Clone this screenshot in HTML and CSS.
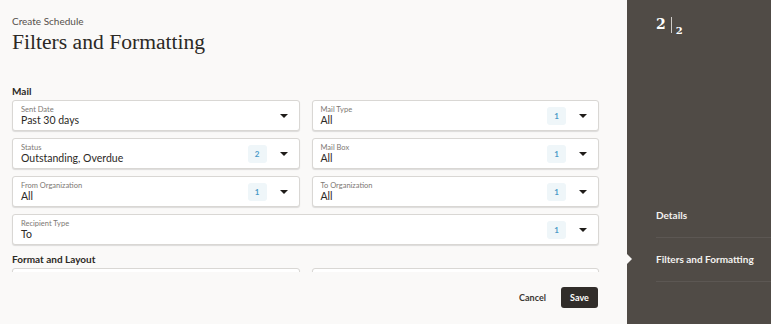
FILE: index.html
```html
<!DOCTYPE html>
<html>
<head>
    <title>Create Schedule</title>
    <link rel="stylesheet" href="styles.css">
</head>
<body>
    <div class="page">
        <div class="main">
            <div class="header">
                <div class="crumb">Create Schedule</div>
                <h1 class="title">Filters and Formatting</h1>
            </div>

            <div class="scroll">
                <div class="section-title">Mail</div>
                <div class="grid">
                    <div class="field">
                        <div class="field-text">
                            <div class="label">Sent Date</div>
                            <div class="value">Past 30 days</div>
                        </div>
                        <span class="caret"></span>
                    </div>
                    <div class="field">
                        <div class="field-text">
                            <div class="label">Mail Type</div>
                            <div class="value">All</div>
                        </div>
                        <span class="badge">1</span>
                        <span class="caret"></span>
                    </div>
                    <div class="field">
                        <div class="field-text">
                            <div class="label">Status</div>
                            <div class="value">Outstanding, Overdue</div>
                        </div>
                        <span class="badge">2</span>
                        <span class="caret"></span>
                    </div>
                    <div class="field">
                        <div class="field-text">
                            <div class="label">Mail Box</div>
                            <div class="value">All</div>
                        </div>
                        <span class="badge">1</span>
                        <span class="caret"></span>
                    </div>
                    <div class="field">
                        <div class="field-text">
                            <div class="label">From Organization</div>
                            <div class="value">All</div>
                        </div>
                        <span class="badge">1</span>
                        <span class="caret"></span>
                    </div>
                    <div class="field">
                        <div class="field-text">
                            <div class="label">To Organization</div>
                            <div class="value">All</div>
                        </div>
                        <span class="badge">1</span>
                        <span class="caret"></span>
                    </div>
                    <div class="field wide">
                        <div class="field-text">
                            <div class="label">Recipient Type</div>
                            <div class="value">To</div>
                        </div>
                        <span class="badge">1</span>
                        <span class="caret"></span>
                    </div>
                </div>

                <div class="section-title format">Format and Layout</div>
                <div class="grid">
                    <div class="field"></div>
                    <div class="field"></div>
                </div>
            </div>

            <div class="footer">
                <span class="cancel">Cancel</span>
                <span class="save">Save</span>
            </div>
        </div>

        <div class="sidebar">
            <div class="steps">
                <span class="step-num">2</span><span class="step-bar"></span><span class="step-total">2</span>
            </div>
            <div class="nav">
                <div class="nav-item">Details</div>
                <div class="nav-item current">Filters and Formatting</div>
            </div>
        </div>
    </div>
</body>
</html>
```

FILE: styles.css
```css
body {
    margin: 0;
    background-color: #faf9f8;
    font-family: Lato, "Noto Sans", sans-serif;
    color: #2c2925;
}

.page {
    display: flex;
    height: 324px;
    overflow: hidden;
}

.main {
    width: 627px;
    flex: none;
    display: flex;
    flex-direction: column;
}

.header {
    padding: 14px 12px 0;
}

.crumb {
    font-size: 10px;
    line-height: 14px;
    color: #55504b;
}

.title {
    margin: 1px 0 0;
    font-family: "Liberation Serif", "DejaVu Serif", serif;
    font-weight: normal;
    font-size: 21.6px;
    line-height: 26px;
    color: #2c2925;
}

.scroll {
    height: 187px;
    margin-top: 30px;
    padding: 0 28px 0 12px;
    overflow: hidden;
}

.section-title {
    font-size: 10px;
    font-weight: bold;
    line-height: 12px;
    margin-bottom: 3px;
}

.section-title.format {
    margin-top: 8px;
}

.grid {
    display: grid;
    grid-template-columns: 1fr 1fr;
    gap: 7px 12px;
}

.field {
    height: 31px;
    box-sizing: border-box;
    display: flex;
    align-items: center;
    padding: 0 11px 0 8px;
    background-color: #fff;
    border: 1px solid #d9d7d4;
    border-radius: 3px;
    box-shadow: 0 1px 1px rgba(0, 0, 0, 0.12);
}

.field.wide {
    grid-column: 1 / 3;
}

.field-text {
    flex: 1;
    min-width: 0;
}

.label {
    font-size: 7.5px;
    line-height: 9px;
    color: #7d7873;
}

.value {
    font-size: 10.5px;
    line-height: 13px;
    color: #2c2925;
}

.badge {
    width: 19px;
    height: 18px;
    margin-right: 13px;
    display: flex;
    justify-content: center;
    align-items: center;
    font-size: 8px;
    font-weight: bold;
    color: #4a9ac8;
    background-color: #eff6f9;
    border-radius: 3px;
}

.caret {
    width: 0;
    height: 0;
    border-left: 4px solid transparent;
    border-right: 4px solid transparent;
    border-top: 4px solid #1f1c19;
}

.footer {
    display: flex;
    justify-content: flex-end;
    align-items: center;
    gap: 15px;
    padding: 15px 29px 0 0;
}

.cancel {
    font-size: 9px;
    font-weight: bold;
    color: #3b3733;
}

.save {
    width: 37px;
    height: 21px;
    display: flex;
    justify-content: center;
    align-items: center;
    font-size: 9px;
    font-weight: bold;
    color: #fff;
    background-color: #312d2a;
    border-radius: 3px;
}

.sidebar {
    flex: 1;
    background-color: #504b46;
    color: #fff;
    padding-left: 29px;
    position: relative;
    display: flex;
    flex-direction: column;
}

.steps {
    margin-top: 15px;
    display: flex;
    align-items: flex-start;
    font-family: "DejaVu Serif", "Liberation Serif", serif;
    font-weight: bold;
}

.step-num {
    font-size: 14px;
    line-height: 18px;
}

.step-bar {
    width: 1px;
    height: 16px;
    margin: 2px 4px 0 5px;
    background-color: #cfccc8;
}

.step-total {
    font-size: 10px;
    line-height: 12px;
    margin-top: 10px;
}

.nav {
    margin-top: 171px;
}

.nav-item {
    font-size: 10px;
    font-weight: bold;
    line-height: 14px;
    padding: 14px 0 15px;
    border-bottom: 1px solid rgba(255, 255, 255, 0.07);
    position: relative;
    color: #f4f2f0;
}

.nav-item:first-child {
    padding-top: 0;
}

.nav-item.current::before {
    content: "";
    position: absolute;
    left: -29px;
    top: 16px;
    border-top: 5px solid transparent;
    border-bottom: 5px solid transparent;
    border-left: 5px solid #faf9f8;
}
```
